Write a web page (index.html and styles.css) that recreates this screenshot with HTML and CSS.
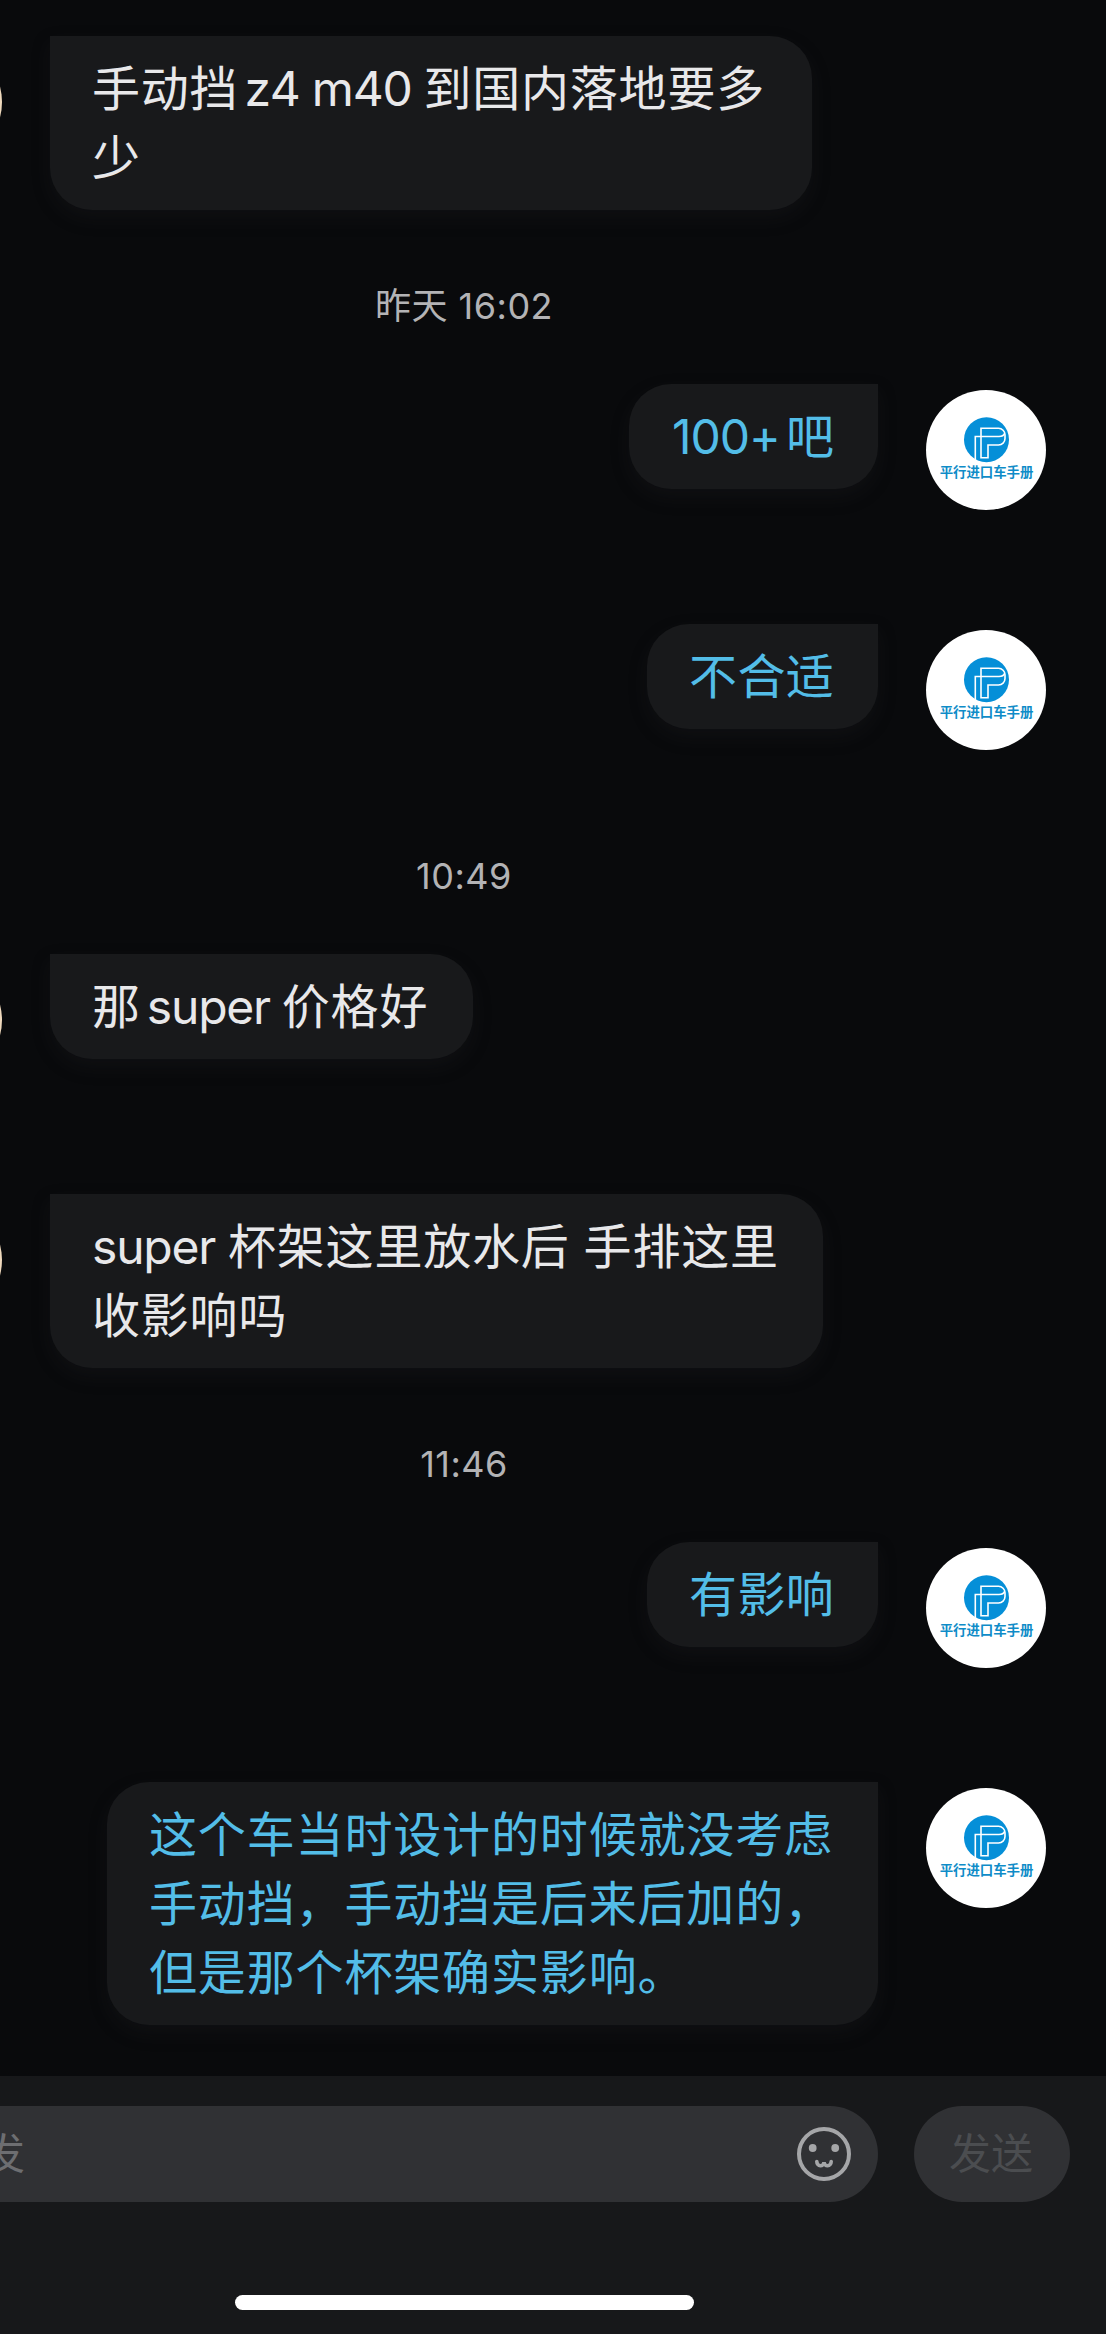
FILE: index.html
```html
<!DOCTYPE html>
<html lang="zh-CN">
<head>
<meta charset="utf-8">
<title>私信</title>
<link rel="stylesheet" href="styles.css">
</head>
<body>
<svg class="defs" width="0" height="0" aria-hidden="true">
  <symbol id="brand" viewBox="0 0 120 120">
    <circle cx="60.5" cy="49.7" r="22.500" fill="#058fd8"/>
    <g fill="none" stroke="#fff" stroke-width="1.6">
      <path d="M55 46.500V38.300H72.500a6.500 6.500 0 0 1 6.500 6.500v3.700a6.500 6.500 0 0 1-6.500 6.500H62V67.800H55V46.500"/>
      <path d="M49.300 70.500V46.500H73q4.500 0 5.500-3"/>
    </g>
    <text x="60.500" y="86.700" text-anchor="middle" class="brand-name">平行进口车手册</text>
  </symbol>
</svg>
<div class="screen">
  <main class="chat">
    <div class="msg in"><span class="avatar peer"></span><p class="bubble w1">手动挡<span class="lat a">z4 m40</span>到国内落地要多<br>少</p></div>
    <time class="stamp">昨天 16:02</time>
    <div class="msg out"><p class="bubble w2"><span class="lat b">100+</span>吧</p><svg class="avatar"><use href="#brand"/></svg></div>
    <div class="msg out"><p class="bubble">不合适</p><svg class="avatar"><use href="#brand"/></svg></div>
    <time class="stamp">10:49</time>
    <div class="msg in"><span class="avatar peer"></span><p class="bubble w3">那<span class="lat c">super</span>价格好</p></div>
    <div class="msg in"><span class="avatar peer"></span><p class="bubble w4"><span class="lat d">super</span>杯架这里放水后<span class="gap"></span>手排这里<br>收影响吗</p></div>
    <time class="stamp">11:46</time>
    <div class="msg out"><p class="bubble">有影响</p><svg class="avatar"><use href="#brand"/></svg></div>
    <div class="msg out"><p class="bubble w5">这个车当时设计的时候就没考虑<br>手动挡，手动挡是后来后加的，<br>但是那个杯架确实影响。</p><svg class="avatar"><use href="#brand"/></svg></div>
  </main>
  <footer class="composer">
    <div class="bar">
      <div class="field"><span class="hint">发</span>
        <svg class="face" viewBox="0 0 54 54"><g fill="none" stroke="#a5a6a8" stroke-width="4"><circle cx="27" cy="27" r="25"/><path stroke-linecap="round" stroke-width="3.600" d="M19.800 34.500c0 5.500 7 5.500 7.200 .500c.2 5 7.200 5 7.200-.500"/></g><g fill="#a5a6a8"><circle cx="15.700" cy="21" r="3.900"/><circle cx="38.200" cy="21" r="3.900"/></g></svg>
      </div>
      <button class="send">发送</button>
    </div>
    <div class="home"></div>
  </footer>
</div>
</body>
</html>
```
FILE: styles.css
```css
* { box-sizing: border-box; }
body { margin: 0; background: #090a0c; font-family: Inter, "Noto Sans CJK SC", sans-serif; overflow: hidden; }
.defs { display: block; height: 0; }
.screen { width: 1106px; height: 2334px; display: flex; flex-direction: column; overflow: hidden; }
.chat { flex: 1; padding-right: 60px; }
.msg { display: flex; align-items: flex-start; gap: 48px; min-height: 156px; margin-top: 84px; }
.msg:first-child { margin-top: 36px; }
.out { justify-content: flex-end; }
.in { margin-left: -118px; }
.avatar { width: 120px; height: 120px; flex: none; margin-top: 6px; border-radius: 50%; background: #fff; }
.peer { background: #efd9bd; }
.bubble { margin: 0; padding: 18px 0 18px 42px; width: 231px; border-radius: 42px; background: #18191b; color: #e8e8ea; font-size: 48px; line-height: 69px; letter-spacing: .8px; white-space: nowrap; box-shadow: 0 8px 18px rgba(30, 30, 33, .3); }
.in .bubble { border-top-left-radius: 0; }
.out .bubble { border-top-right-radius: 0; color: #53bde8; letter-spacing: .4px; }
.in .w1 { width: 762px; }
.w2 { width: 249px; }
.w3 { width: 423px; }
.w4 { width: 773px; }
.w5 { width: 771px; }
.out .w5 { letter-spacing: .85px; }
.lat { display: inline-block; letter-spacing: -1.2px; }
.a { width: 185px; padding-left: 6px; }
.out .b { width: 115px; padding-left: 1px; letter-spacing: -1px; }
.c { width: 141px; padding-left: 6px; }
.d { width: 136px; }
.gap { display: inline-block; width: 14px; }
.stamp { display: block; width: 928px; margin-top: 84px; height: 24px; line-height: 24px; text-align: center; font-size: 36px; letter-spacing: .5px; color: #b3b3b5; }
.stamp + .msg { margin-top: 66px; }
.brand-name { font: 700 13.400px "Noto Sans CJK SC", sans-serif; fill: #0f8cc8; }
.composer { height: 258px; background: #17181a; padding-top: 30px; }
.bar { display: flex; gap: 36px; height: 96px; }
.field { width: 878px; border-radius: 0 48px 48px 0; background: #303134; display: flex; align-items: center; justify-content: space-between; padding-right: 27px; overflow: hidden; }
.hint { font-size: 42px; line-height: 60px; color: #6d6e71; margin-left: -17px; }
.face { width: 54px; height: 54px; }
.send { width: 156px; border: 0; border-radius: 48px; background: #303134; color: #4b4d50; font: 42px/60px Inter, "Noto Sans CJK SC", sans-serif; padding: 0 2px 0 0; }
.home { width: 459px; height: 15px; border-radius: 8px; background: #fff; margin: 93px 0 0 235px; }
```
